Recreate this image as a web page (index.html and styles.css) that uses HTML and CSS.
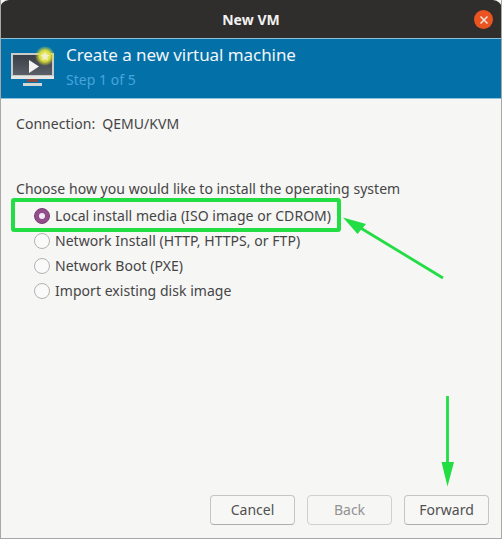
FILE: index.html
```html
<!DOCTYPE html>
<html lang="en">
<head>
    <meta charset="UTF-8">
    <meta name="viewport" content="width=device-width, initial-scale=1.0">
    <title>New VM</title>
    <link rel="stylesheet" href="styles.css">
</head>
<body>
    <div class="window">
        <div class="titlebar">
            <span class="title">New VM</span>
            <span class="close">
                <svg width="10" height="10" viewBox="0 0 10 10"><path d="M1.5 1.5 8.5 8.5M8.5 1.5 1.5 8.5" stroke="#f6e4dc" stroke-width="1.5" fill="none"/></svg>
            </span>
        </div>

        <div class="banner">
            <svg class="vm-icon" width="46" height="44" viewBox="0 0 46 44">
                <defs>
                    <radialGradient id="glow">
                        <stop offset="0" stop-color="#f4f4a0"/>
                        <stop offset="0.55" stop-color="#d8dc3a"/>
                        <stop offset="1" stop-color="#d8dc3a" stop-opacity="0"/>
                    </radialGradient>
                    <linearGradient id="screen" x1="0" y1="0" x2="0" y2="1">
                        <stop offset="0" stop-color="#3a3f47"/>
                        <stop offset="1" stop-color="#5a5f68"/>
                    </linearGradient>
                </defs>
                <rect x="1" y="8" width="43" height="26" fill="#c9cbc9"/>
                <rect x="3" y="10" width="39" height="20" fill="url(#screen)"/>
                <rect x="1" y="31" width="43" height="3" fill="#e6e6e4"/>
                <path d="M19 15 29 21.500 19 28Z" fill="#f4f4f4"/>
                <rect x="17" y="34" width="11" height="3" fill="#8a4a44"/>
                <rect x="13" y="38" width="19" height="3" fill="#d5d7d5"/>
                <circle cx="35" cy="11" r="10" fill="url(#glow)"/>
                <path d="M35 6.500 36.400 9.600 39.600 10 37.200 12.200 37.900 15.400 35 13.800 32.100 15.400 32.800 12.200 30.400 10 33.600 9.600Z" fill="#f3efc8"/>
            </svg>
            <div class="banner-text">
                <div class="banner-title">Create a new virtual machine</div>
                <div class="banner-step">Step 1 of 5</div>
            </div>
        </div>

        <div class="content">
            <div class="connection"><span>Connection:</span><span>QEMU/KVM</span></div>
            <div class="prompt">Choose how you would like to install the operating system</div>
            <div class="options">
                <label class="option"><span class="radio checked"></span>Local install media (ISO image or CDROM)</label>
                <label class="option"><span class="radio"></span>Network Install (HTTP, HTTPS, or FTP)</label>
                <label class="option"><span class="radio"></span>Network Boot (PXE)</label>
                <label class="option"><span class="radio"></span>Import existing disk image</label>
            </div>
            <div class="actions">
                <button>Cancel</button>
                <button disabled>Back</button>
                <button>Forward</button>
            </div>
        </div>

        <!-- annotations drawn on top of the screenshot -->
        <div class="highlight"></div>
        <svg class="arrows" width="502" height="539" viewBox="0 0 502 539">
            <path d="M443 278 359 227" stroke="#22dd44" stroke-width="2.800" fill="none"/>
            <path d="M343 217.500 366 224 357.500 234Z" fill="#22dd44"/>
            <path d="M447.500 396V464" stroke="#22dd44" stroke-width="2.800" fill="none"/>
            <path d="M441.500 462H454L447.500 486.500Z" fill="#22dd44"/>
        </svg>
    </div>
</body>
</html>
```

FILE: styles.css
```css
html, body {
    margin: 0;
    padding: 0;
    background: #f6f6f5;
}
.window {
    position: relative;
    width: 502px;
    height: 539px;
    display: flex;
    flex-direction: column;
    box-sizing: border-box;
    font-family: "Noto Sans", sans-serif;
    font-size: 14px;
    letter-spacing: 0.04px;
    color: #454545;
    background: #f6f6f5;
    overflow: hidden;
    border-left: 1px solid #a8a8a8;
    border-right: 1px solid #a8a8a8;
    border-bottom: 1px solid #a8a8a8;
}
.titlebar {
    height: 38px;
    margin: 0 -1px;
    flex: none;
    display: flex;
    align-items: center;
    justify-content: center;
    background: #302e2c;
    border-radius: 9px 9px 0 0;
    position: relative;
}
.title {
    color: #f2f2f2;
    font-weight: 700;
    font-size: 14px;
}
.close {
    position: absolute;
    right: 9px;
    top: 10px;
    width: 19px;
    height: 19px;
    border-radius: 50%;
    background: #e95420;
    display: flex;
    align-items: center;
    justify-content: center;
}
.banner {
    height: 61px;
    flex: none;
    margin: 0 -1px;
    box-sizing: border-box;
    padding: 0 0 0 10px;
    display: flex;
    gap: 10px;
    background: #0470a8;
    border-top: 1px solid #8fc0da;
    border-bottom: 1px solid #8fc0da;
}
.vm-icon {
    margin-top: 6px;
}
.banner-text {
    padding-top: 3px;
}
.banner-title {
    color: #f0f6fa;
    font-size: 17px;
    letter-spacing: -0.07px;
    line-height: 26px;
}
.banner-step {
    color: #45a5dc;
    font-size: 14px;
    line-height: 20px;
    margin-top: 2px;
}
.content {
    flex: 1;
    display: flex;
    flex-direction: column;
    padding: 15px 12px 13px 15px;
}
.connection {
    display: flex;
    gap: 7px;
    line-height: 20px;
}
.prompt {
    margin-top: 45px;
    line-height: 20px;
}
.options {
    margin-top: 4px;
    display: flex;
    flex-direction: column;
}
.option {
    height: 25px;
    display: flex;
    align-items: center;
    gap: 5px;
    padding-left: 18px;
}
.radio {
    width: 14px;
    height: 14px;
    flex: none;
    border: 1px solid #b5b1ad;
    border-radius: 50%;
    background: #fafafa;
    display: flex;
    align-items: center;
    justify-content: center;
}
.radio.checked {
    background: #924d8b;
    border-color: #7d4078;
}
.radio.checked::after {
    content: "";
    width: 6px;
    height: 6px;
    border-radius: 50%;
    background: #f4eaf3;
}
.actions {
    margin-top: auto;
    display: flex;
    justify-content: flex-end;
    gap: 12px;
}
button {
    width: 85px;
    height: 30px;
    padding: 0 0 2px;
    font-family: inherit;
    font-size: 14px;
    color: #505050;
    background: #f7f7f6;
    border: 1px solid #c8c5c1;
    border-bottom-color: #b0aca8;
    border-radius: 4px;
}
button:disabled {
    color: #929292;
    background: #f6f6f5;
    border-color: #d2cfcc;
}
.highlight {
    position: absolute;
    left: 10px;
    top: 198px;
    width: 330px;
    height: 34px;
    box-sizing: border-box;
    border: 4px solid #22dd44;
    border-radius: 3px;
}
.arrows {
    position: absolute;
    left: -1px;
    top: 0;
}
```
